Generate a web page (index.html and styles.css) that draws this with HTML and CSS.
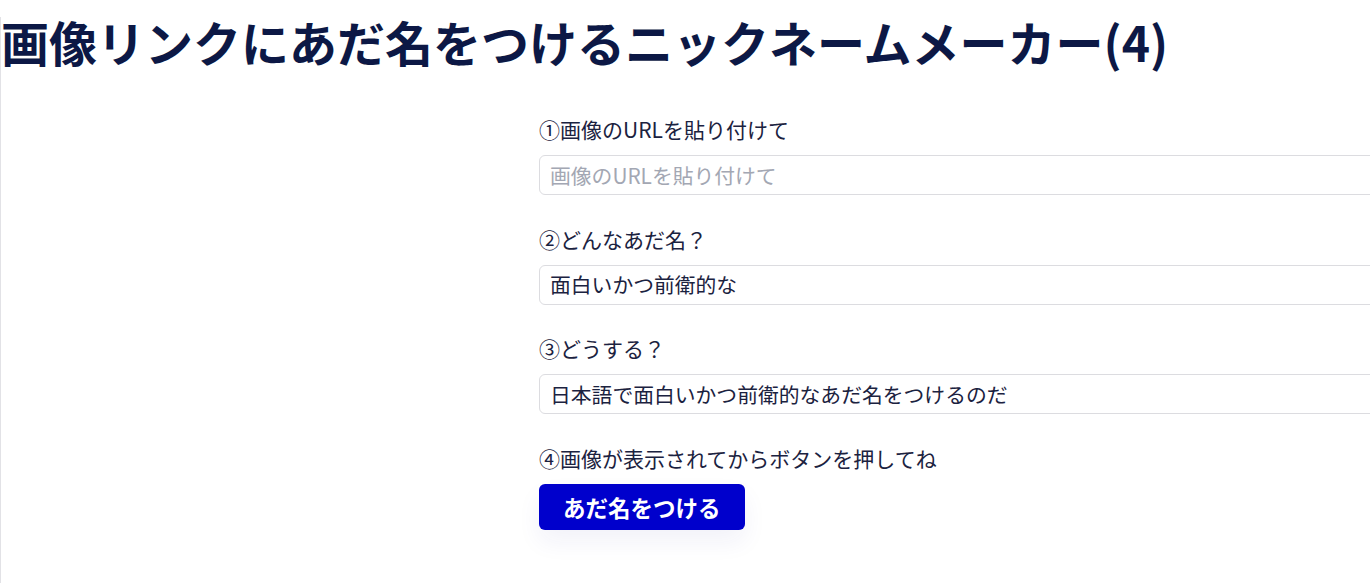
FILE: index.html
```html
<!DOCTYPE html>
<html lang="ja">
<head>
<meta charset="utf-8">
<title>ニックネームメーカー</title>
<link rel="stylesheet" href="styles.css">
</head>
<body>
<div class="page">
  <h1 class="title">画像リンクにあだ名をつけるニックネームメーカー(4)</h1>
  <form class="form">
    <div class="field">
      <label class="label" for="url">①画像のURLを貼り付けて</label>
      <input class="input" id="url" type="text" placeholder="画像のURLを貼り付けて">
    </div>
    <div class="field">
      <label class="label" for="kind">②どんなあだ名？</label>
      <input class="input" id="kind" type="text" value="面白いかつ前衛的な">
    </div>
    <div class="field">
      <label class="label" for="how">③どうする？</label>
      <input class="input" id="how" type="text" value="日本語で面白いかつ前衛的なあだ名をつけるのだ">
    </div>
    <div class="field">
      <span class="label">④画像が表示されてからボタンを押してね</span>
      <button class="button" type="button">あだ名をつける</button>
    </div>
  </form>
</div>
</body>
</html>
```

FILE: styles.css
```css
html, body {
  margin: 0;
  padding: 0;
  background: #ffffff;
  overflow: hidden;
}
body {
  font-family: "Noto Sans CJK JP", "Noto Sans", sans-serif;
  color: #1b2240;
}
.page {
  min-height: 583px;
  border-left: 1px solid #e2e2e6;
  box-sizing: border-box;
}
.title {
  margin: 17px 0 0 0;
  font-size: 48px;
  line-height: 48px;
  font-weight: 700;
  color: #0c1845;
  white-space: nowrap;
}
.form {
  margin: 50px 0 0 538px;
  display: flex;
  flex-direction: column;
  gap: 29.5px;
}
.field {
  display: flex;
  flex-direction: column;
  align-items: flex-start;
  gap: 10px;
}
.label {
  font-size: 21px;
  line-height: 28px;
  margin-bottom: 2px;
  color: #1b2240;
}
.input {
  box-sizing: border-box;
  width: 900px;
  height: 40px;
  padding: 0 10px 1px;
  border: 1px solid #dcdce0;
  border-radius: 6px;
  font-family: "Noto Sans CJK JP", "Noto Sans", sans-serif;
  font-size: 20.8px;
  color: #1b2240;
  background: #ffffff;
  outline: none;
}
.input::placeholder {
  color: #a3a7b3;
}
.button {
  height: 46px;
  padding: 0 24px;
  border: none;
  border-radius: 6px;
  background: #0000cc;
  color: #ffffff;
  font-family: "Noto Sans CJK JP", "Noto Sans", sans-serif;
  font-size: 22.5px;
  font-weight: 700;
  box-shadow: 0 12px 24px rgba(40, 40, 160, 0.06);
  cursor: pointer;
}
```
